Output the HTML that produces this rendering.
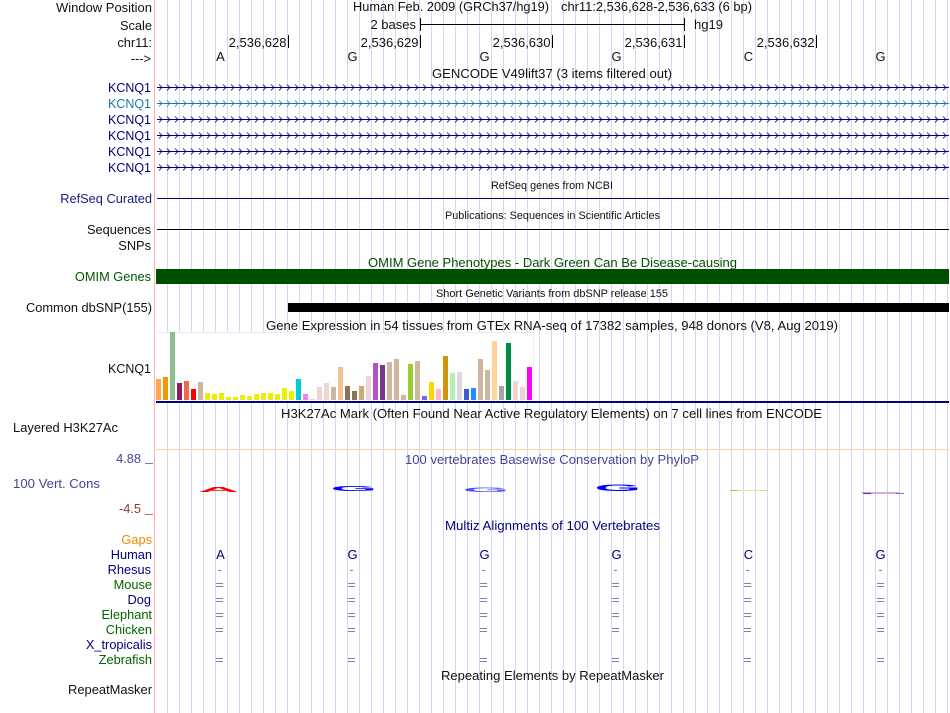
<!DOCTYPE html>
<html><head><meta charset="utf-8"><style>
html,body{margin:0;padding:0;background:#fff;width:950px;height:713px;overflow:hidden}
svg{display:block;position:absolute;left:0;top:0}
text{font-family:"Liberation Sans",Arial,sans-serif;font-size:12.8px;fill:#111}
.r{font-size:13px}
.e{text-anchor:end}.m{text-anchor:middle}
.n{fill:#000080}.g{fill:#006400}.s{font-size:11px}
</style></head><body>
<svg width="950" height="713" viewBox="0 0 950 713" xmlns="http://www.w3.org/2000/svg">
<defs>
<pattern id="grid" x="167" y="0" width="12" height="713" patternUnits="userSpaceOnUse"><rect width="1" height="713" fill="#d6d6f6"/></pattern>
<pattern id="ch" x="158" y="84" width="8" height="16" patternUnits="userSpaceOnUse"><path d="M1 0.5L4 3.5L1 6.5" fill="none" stroke="#000080" stroke-width="0.8"/></pattern>
<pattern id="cht" x="158" y="100" width="8" height="16" patternUnits="userSpaceOnUse"><path d="M1 0.5L4 3.5L1 6.5" fill="none" stroke="#1a78b0" stroke-width="0.8"/></pattern>
</defs>
<rect width="950" height="713" fill="#fff"/>
<rect x="156" width="794" height="713" fill="url(#grid)"/>
<rect x="154" width="1" height="713" fill="#ffb0b0"/>

<!-- labels -->
<text x="152" y="12" class="e" textLength="96" lengthAdjust="spacingAndGlyphs">Window Position</text>
<text x="152" y="30" class="e">Scale</text>
<text x="152" y="47" class="e">chr11:</text>
<text x="151" y="63" class="e">---&gt;</text>
<text x="353" y="11" textLength="196" lengthAdjust="spacingAndGlyphs">Human Feb. 2009 (GRCh37/hg19)</text>
<text x="561" y="11" textLength="191" lengthAdjust="spacingAndGlyphs">chr11:2,536,628-2,536,633 (6 bp)</text>
<text x="416" y="29" class="e r">2 bases</text>
<text x="694" y="29" class="r">hg19</text>
<rect x="420" y="24" width="265" height="1" fill="#000"/>
<rect x="420" y="18" width="1" height="13" fill="#000"/>
<rect x="684" y="18" width="1" height="13" fill="#000"/>

<text x="286.500" y="47" class="e r">2,536,628</text><rect x="288" y="35" width="1" height="13" fill="#000"/>
<text x="418.500" y="47" class="e r">2,536,629</text><rect x="420" y="35" width="1" height="13" fill="#000"/>
<text x="550.500" y="47" class="e r">2,536,630</text><rect x="552" y="35" width="1" height="13" fill="#000"/>
<text x="682.500" y="47" class="e r">2,536,631</text><rect x="684" y="35" width="1" height="13" fill="#000"/>
<text x="814.500" y="47" class="e r">2,536,632</text><rect x="816" y="35" width="1" height="13" fill="#000"/>

<text x="220.500" y="61" class="m r">A</text><text x="352.500" y="61" class="m r">G</text><text x="484.500" y="61" class="m r">G</text><text x="616.500" y="61" class="m r">G</text><text x="748.500" y="61" class="m r">C</text><text x="880.500" y="61" class="m r">G</text>

<text x="432" y="78" textLength="240" lengthAdjust="spacingAndGlyphs">GENCODE V49lift37 (3 items filtered out)</text>
<text x="151" y="92" class="e n" textLength="43" lengthAdjust="spacingAndGlyphs">KCNQ1</text>
<text x="151" y="108" class="e" style="fill:#1a78b0" textLength="43" lengthAdjust="spacingAndGlyphs">KCNQ1</text>
<text x="151" y="124" class="e n" textLength="43" lengthAdjust="spacingAndGlyphs">KCNQ1</text>
<text x="151" y="140" class="e n" textLength="43" lengthAdjust="spacingAndGlyphs">KCNQ1</text>
<text x="151" y="156" class="e n" textLength="43" lengthAdjust="spacingAndGlyphs">KCNQ1</text>
<text x="151" y="172" class="e n" textLength="43" lengthAdjust="spacingAndGlyphs">KCNQ1</text>
<rect x="157" y="87" width="792" height="1" fill="#000080"/>
<rect x="157" y="103" width="792" height="1" fill="#1a78b0"/>
<rect x="157" y="119" width="792" height="1" fill="#000080"/>
<rect x="157" y="135" width="792" height="1" fill="#000080"/>
<rect x="157" y="151" width="792" height="1" fill="#000080"/>
<rect x="157" y="167" width="792" height="1" fill="#000080"/>
<rect x="157" y="84" width="792" height="7" fill="url(#ch)"/>
<rect x="157" y="100" width="792" height="7" fill="url(#cht)"/>
<rect x="157" y="116" width="792" height="7" fill="url(#ch)"/>
<rect x="157" y="132" width="792" height="7" fill="url(#ch)"/>
<rect x="157" y="148" width="792" height="7" fill="url(#ch)"/>
<rect x="157" y="164" width="792" height="7" fill="url(#ch)"/>

<text x="491" y="189" class="s" textLength="122" lengthAdjust="spacingAndGlyphs">RefSeq genes from NCBI</text>
<text x="152" y="203" class="e" style="fill:#191980">RefSeq Curated</text>
<rect x="157" y="198" width="792" height="1" fill="#000080"/>
<text x="445" y="219" class="s" textLength="215" lengthAdjust="spacingAndGlyphs">Publications: Sequences in Scientific Articles</text>
<text x="151" y="234" class="e">Sequences</text>
<rect x="157" y="229" width="792" height="1" fill="#000"/>
<text x="151" y="250" class="e">SNPs</text>
<text x="368" y="267" style="fill:#004f00" textLength="369" lengthAdjust="spacingAndGlyphs">OMIM Gene Phenotypes - Dark Green Can Be Disease-causing</text>
<text x="151" y="281" class="e" style="fill:#005500">OMIM Genes</text>
<rect x="156" y="269" width="793" height="15" fill="#004f00"/>
<text x="436" y="297" class="s" textLength="232" lengthAdjust="spacingAndGlyphs">Short Genetic Variants from dbSNP release 155</text>
<text x="152" y="312" class="e" textLength="126" lengthAdjust="spacingAndGlyphs">Common dbSNP(155)</text>
<rect x="288" y="303" width="661" height="9" fill="#000"/>
<text x="266" y="330" textLength="572" lengthAdjust="spacingAndGlyphs">Gene Expression in 54 tissues from GTEx RNA-seq of 17382 samples, 948 donors (V8, Aug 2019)</text>

<!-- GTEx graph -->
<rect x="156" y="332" width="378" height="69" fill="#fff"/>
<rect x="156" y="332" width="378" height="1" fill="#eeeeee"/>
<rect x="533" y="332" width="1" height="69" fill="#eeeeee"/>
<g>
<rect x="156" y="379" width="5" height="21" fill="#ffa54f"/>
<rect x="163" y="377" width="5" height="23" fill="#ee9a00"/>
<rect x="170" y="332" width="5" height="68" fill="#8fbc8f"/>
<rect x="177" y="383" width="5" height="17" fill="#8b1c62"/>
<rect x="184" y="381" width="5" height="19" fill="#ee6a50"/>
<rect x="191" y="389" width="5" height="11" fill="#ff0000"/>
<rect x="198" y="382" width="5" height="18" fill="#cdb79e"/>
<rect x="205" y="393" width="5" height="7" fill="#eeee00"/>
<rect x="212" y="394" width="5" height="6" fill="#eeee00"/>
<rect x="219" y="393" width="5" height="7" fill="#eeee00"/>
<rect x="226" y="397" width="5" height="3" fill="#eeee00"/>
<rect x="233" y="397" width="5" height="3" fill="#eeee00"/>
<rect x="240" y="395" width="5" height="5" fill="#eeee00"/>
<rect x="247" y="396" width="5" height="4" fill="#eeee00"/>
<rect x="254" y="394" width="5" height="6" fill="#eeee00"/>
<rect x="261" y="393" width="5" height="7" fill="#eeee00"/>
<rect x="268" y="393" width="5" height="7" fill="#eeee00"/>
<rect x="275" y="394" width="5" height="6" fill="#eeee00"/>
<rect x="282" y="388" width="5" height="12" fill="#eeee00"/>
<rect x="289" y="391" width="5" height="9" fill="#eeee00"/>
<rect x="296" y="379" width="5" height="21" fill="#00cdcd"/>
<rect x="303" y="394" width="5" height="6" fill="#ee82ee"/>
<rect x="310" y="399" width="5" height="1" fill="#eed5d2"/>
<rect x="317" y="387" width="5" height="13" fill="#eed5d2"/>
<rect x="324" y="383" width="5" height="17" fill="#eed5d2"/>
<rect x="331" y="387" width="5" height="13" fill="#cdb79e"/>
<rect x="338" y="367" width="5" height="33" fill="#eec591"/>
<rect x="345" y="386" width="5" height="14" fill="#8b7355"/>
<rect x="352" y="391" width="5" height="9" fill="#8b7355"/>
<rect x="359" y="386" width="5" height="14" fill="#cdaa7d"/>
<rect x="366" y="376" width="5" height="24" fill="#eed5d2"/>
<rect x="373" y="363" width="5" height="37" fill="#b452cd"/>
<rect x="380" y="365" width="5" height="35" fill="#7a378b"/>
<rect x="387" y="362" width="5" height="38" fill="#cdb79e"/>
<rect x="394" y="359" width="5" height="41" fill="#cdb79e"/>
<rect x="401" y="395" width="5" height="5" fill="#cdb79e"/>
<rect x="408" y="364" width="5" height="36" fill="#9acd32"/>
<rect x="415" y="361" width="5" height="39" fill="#cdb79e"/>
<rect x="422" y="396" width="5" height="4" fill="#7a67ee"/>
<rect x="429" y="382" width="5" height="18" fill="#ffd700"/>
<rect x="436" y="389" width="5" height="11" fill="#ffb6c1"/>
<rect x="443" y="356" width="5" height="44" fill="#cd950c"/>
<rect x="450" y="373" width="5" height="27" fill="#b4eeb4"/>
<rect x="457" y="372" width="5" height="28" fill="#d9d9d9"/>
<rect x="464" y="389" width="5" height="11" fill="#3a5fcd"/>
<rect x="471" y="388" width="5" height="12" fill="#1e90ff"/>
<rect x="478" y="359" width="5" height="41" fill="#cdb79e"/>
<rect x="485" y="370" width="5" height="30" fill="#cdb79e"/>
<rect x="492" y="341" width="5" height="59" fill="#ffd39b"/>
<rect x="499" y="386" width="5" height="14" fill="#a6a6a6"/>
<rect x="506" y="343" width="5" height="57" fill="#008b45"/>
<rect x="513" y="381" width="5" height="19" fill="#eed5d2"/>
<rect x="520" y="387" width="5" height="13" fill="#eed5d2"/>
<rect x="527" y="367" width="5" height="33" fill="#ff00ff"/>
</g>
<rect x="156" y="401" width="793" height="2" fill="#000080"/>
<text x="151" y="373" class="e" textLength="43" lengthAdjust="spacingAndGlyphs">KCNQ1</text>

<text x="281" y="418" textLength="541" lengthAdjust="spacingAndGlyphs">H3K27Ac Mark (Often Found Near Active Regulatory Elements) on 7 cell lines from ENCODE</text>
<text x="13" y="432" textLength="105" lengthAdjust="spacingAndGlyphs">Layered H3K27Ac</text>
<rect x="156" y="449" width="793" height="1" fill="#fdd49a"/>

<text x="141" y="463" class="e" style="fill:#444499">4.88</text>
<rect x="145" y="463" width="8" height="1" fill="#7777bb"/>
<text x="13" y="488" style="fill:#444499" textLength="87" lengthAdjust="spacingAndGlyphs">100 Vert. Cons</text>
<text x="141" y="513" class="e" style="fill:#8b3a3a">-4.5</text>
<rect x="145" y="514" width="8" height="1" fill="#b07070"/>
<text x="405" y="464" style="fill:#444499" textLength="294" lengthAdjust="spacingAndGlyphs">100 vertebrates Basewise Conservation by PhyloP</text>

<!-- squished conservation letters -->
<text transform="translate(198,492) scale(4.4,0.55)" style="fill:#ff0000;font-weight:bold;font-size:13px">A</text>
<text transform="translate(330.500,491) scale(4.6,0.55)" style="fill:#0000ff;font-weight:bold;font-size:13px">G</text>
<text transform="translate(462.500,492) scale(4.6,0.48)" style="fill:#3030ff;font-weight:bold;font-size:13px;opacity:.85">G</text>
<text transform="translate(594.500,491) scale(4.6,0.72)" style="fill:#0000ff;font-weight:bold;font-size:13px">G</text>
<rect x="730" y="490" width="38" height="1" fill="#e6e6a8"/>
<rect x="730" y="490" width="8" height="1" fill="#c0c020"/>
<rect x="760" y="490" width="8" height="1" fill="#d8d880"/>
<rect x="861" y="492" width="38" height="1" fill="#ff9aa0"/>
<rect x="863" y="493" width="41" height="1" fill="#b8b8ff"/>
<rect x="863" y="493" width="8" height="1" fill="#3030ff"/>
<rect x="896" y="493" width="8" height="1" fill="#7070ff"/>

<text x="445" y="530" class="n" textLength="215" lengthAdjust="spacingAndGlyphs">Multiz Alignments of 100 Vertebrates</text>
<text x="152" y="544" class="e" style="fill:#ee8c00">Gaps</text>
<text x="152" y="559" class="e n">Human</text>
<text x="151" y="574" class="e n">Rhesus</text>
<text x="152" y="589" class="e g">Mouse</text>
<text x="151" y="604" class="e n">Dog</text>
<text x="152" y="619" class="e g">Elephant</text>
<text x="152" y="634" class="e g">Chicken</text>
<text x="152" y="649" class="e n">X_tropicalis</text>
<text x="152" y="664" class="e g">Zebrafish</text>

<text x="220.500" y="559" class="m n r">A</text><text x="352.500" y="559" class="m n r">G</text><text x="484.500" y="559" class="m n r">G</text><text x="616.500" y="559" class="m n r">G</text><text x="748.500" y="559" class="m n r">C</text><text x="880.500" y="559" class="m n r">G</text>
<g fill="#8080b8">
<rect x="218" y="570" width="3" height="1"/><rect x="350" y="570" width="3" height="1"/><rect x="482" y="570" width="3" height="1"/><rect x="614" y="570" width="3" height="1"/><rect x="746" y="570" width="3" height="1"/><rect x="879" y="570" width="3" height="1"/>
<path d="M216 583h7v1h-7zM216 586h7v1h-7zM348 583h7v1h-7zM348 586h7v1h-7zM480 583h7v1h-7zM480 586h7v1h-7zM612 583h7v1h-7zM612 586h7v1h-7zM744 583h7v1h-7zM744 586h7v1h-7zM877 583h7v1h-7zM877 586h7v1h-7z"/>
<path d="M216 598h7v1h-7zM216 601h7v1h-7zM348 598h7v1h-7zM348 601h7v1h-7zM480 598h7v1h-7zM480 601h7v1h-7zM612 598h7v1h-7zM612 601h7v1h-7zM744 598h7v1h-7zM744 601h7v1h-7zM877 598h7v1h-7zM877 601h7v1h-7z"/>
<path d="M216 613h7v1h-7zM216 616h7v1h-7zM348 613h7v1h-7zM348 616h7v1h-7zM480 613h7v1h-7zM480 616h7v1h-7zM612 613h7v1h-7zM612 616h7v1h-7zM744 613h7v1h-7zM744 616h7v1h-7zM877 613h7v1h-7zM877 616h7v1h-7z"/>
<path d="M216 628h7v1h-7zM216 631h7v1h-7zM348 628h7v1h-7zM348 631h7v1h-7zM480 628h7v1h-7zM480 631h7v1h-7zM612 628h7v1h-7zM612 631h7v1h-7zM744 628h7v1h-7zM744 631h7v1h-7zM877 628h7v1h-7zM877 631h7v1h-7z"/>
<path d="M216 658h7v1h-7zM216 661h7v1h-7zM348 658h7v1h-7zM348 661h7v1h-7zM480 658h7v1h-7zM480 661h7v1h-7zM612 658h7v1h-7zM612 661h7v1h-7zM744 658h7v1h-7zM744 661h7v1h-7zM877 658h7v1h-7zM877 661h7v1h-7z"/>
</g>

<text x="441" y="680" textLength="223" lengthAdjust="spacingAndGlyphs">Repeating Elements by RepeatMasker</text>
<text x="152" y="694" class="e" textLength="84" lengthAdjust="spacingAndGlyphs">RepeatMasker</text>
</svg>
</body></html>
